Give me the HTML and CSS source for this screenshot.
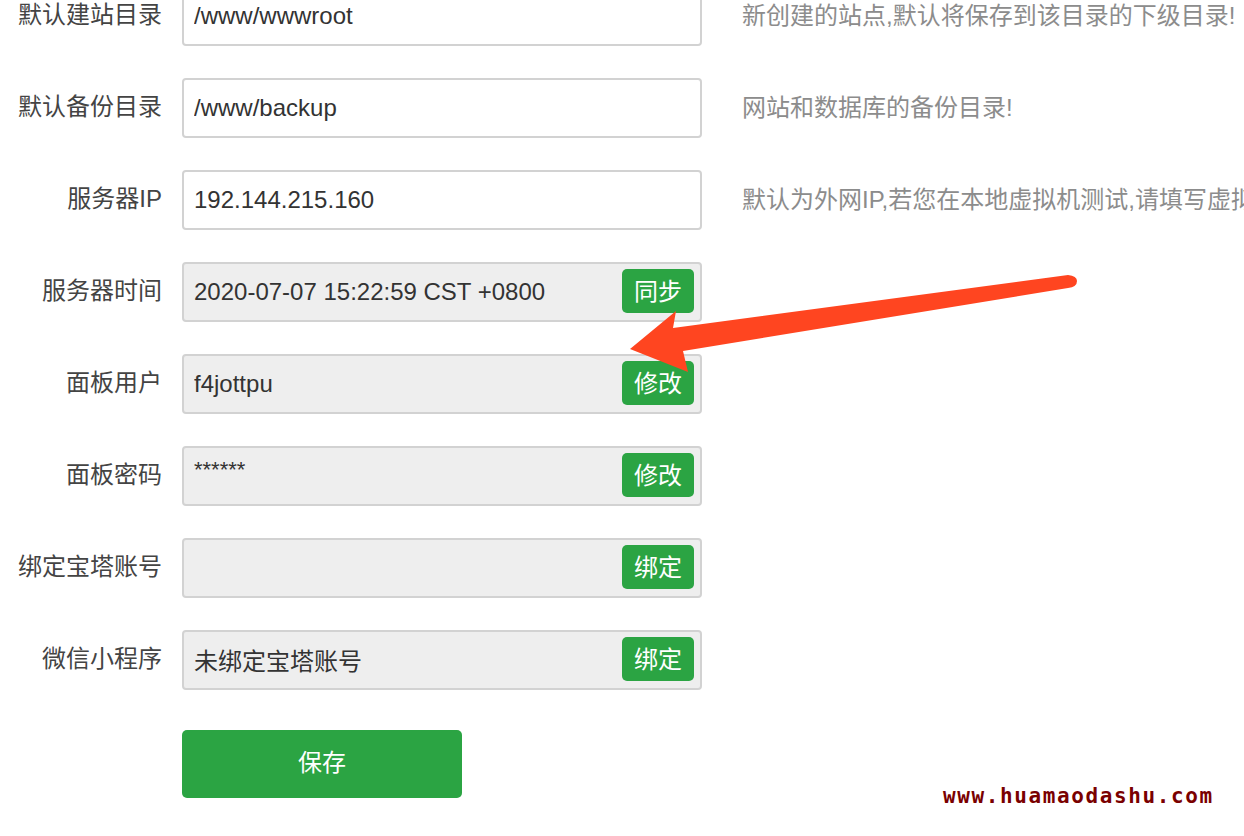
FILE: index.html
```html
<!DOCTYPE html>
<html lang="zh-CN">
<head>
    <meta charset="UTF-8">
    <meta name="viewport" content="width=device-width, initial-scale=1.0">
    <title>面板设置</title>
    <link rel="stylesheet" href="styles.css">
</head>
<body>
    <div class="page">
        <form class="settings-form">
            <div class="form-row">
                <label class="row-label">默认建站目录</label>
                <div class="field">
                    <input class="field-input" type="text" value="/www/wwwroot">
                </div>
                <span class="row-tip">新创建的站点,默认将保存到该目录的下级目录!</span>
            </div>
            <div class="form-row">
                <label class="row-label">默认备份目录</label>
                <div class="field">
                    <input class="field-input" type="text" value="/www/backup">
                </div>
                <span class="row-tip">网站和数据库的备份目录!</span>
            </div>
            <div class="form-row">
                <label class="row-label">服务器IP</label>
                <div class="field">
                    <input class="field-input" type="text" value="192.144.215.160">
                </div>
                <span class="row-tip">默认为外网IP,若您在本地虚拟机测试,请填写虚拟机IP!</span>
            </div>
            <div class="form-row">
                <label class="row-label">服务器时间</label>
                <div class="field is-disabled">
                    <input class="field-input" type="text" value="2020-07-07 15:22:59 CST +0800" disabled>
                    <button type="button" class="field-btn">同步</button>
                </div>
            </div>
            <div class="form-row">
                <label class="row-label">面板用户</label>
                <div class="field is-disabled">
                    <input class="field-input" type="text" value="f4jottpu" disabled>
                    <button type="button" class="field-btn">修改</button>
                </div>
            </div>
            <div class="form-row">
                <label class="row-label">面板密码</label>
                <div class="field is-disabled">
                    <input class="field-input is-mask" type="text" value="******" disabled>
                    <button type="button" class="field-btn">修改</button>
                </div>
            </div>
            <div class="form-row">
                <label class="row-label">绑定宝塔账号</label>
                <div class="field is-disabled">
                    <input class="field-input" type="text" value="" disabled>
                    <button type="button" class="field-btn">绑定</button>
                </div>
            </div>
            <div class="form-row">
                <label class="row-label">微信小程序</label>
                <div class="field is-disabled">
                    <input class="field-input" type="text" value="未绑定宝塔账号" disabled>
                    <button type="button" class="field-btn">绑定</button>
                </div>
            </div>
            <div class="form-actions">
                <button type="button" class="save-btn">保存</button>
            </div>
        </form>

        <!-- annotation arrow drawn over the screenshot -->
        <svg class="annotation" width="1244" height="836" viewBox="0 0 1244 836">
            <path d="M630 349 L676 311 L673 328 L1068 275 Q1077 276 1077 281 Q1077 287 1068 288 L683 351 L688 372 Z" fill="#ff4520"/>
        </svg>

        <div class="watermark">www.huamaodashu.com</div>
    </div>
</body>
</html>
```

FILE: styles.css
```css
:root {
    --text-primary: #333;
    --text-label: #444;
    --text-tip: #8c8c8c;
    --border-color: #d2d2d2;
    --disabled-bg: #eeeeee;
    --green: #2ba443;
}

html, body {
    margin: 0;
    height: 100%;
    overflow: hidden;
    background: #fff;
}

body {
    font-family: "Liberation Sans", "Noto Sans CJK SC", sans-serif;
    color: var(--text-primary);
}

.page {
    position: relative;
    width: 1244px;
    height: 836px;
    overflow: hidden;
}

/* --- Form --- */
.settings-form {
    margin-top: -14px;
    display: flex;
    flex-direction: column;
    gap: 32px;
}

.form-row {
    display: flex;
    align-items: center;
    gap: 20px;
    height: 60px;
}

.row-label {
    width: 162px;
    flex-shrink: 0;
    text-align: right;
    font-size: 24px;
    color: var(--text-label);
    white-space: nowrap;
    margin-top: -7px;
}

.field {
    width: 520px;
    height: 60px;
    flex-shrink: 0;
    box-sizing: border-box;
    border: 2px solid var(--border-color);
    border-radius: 4px;
    background: #fff;
    display: flex;
    align-items: center;
    padding: 0 6px 0 10px;
}
.field.is-disabled { background: var(--disabled-bg); }

.field-input {
    flex: 1;
    min-width: 0;
    border: none;
    outline: none;
    background: transparent;
    padding: 0;
    font-family: inherit;
    font-size: 24px;
    color: var(--text-primary);
    margin-top: -1px;
}
.field-input:disabled { color: var(--text-primary); -webkit-text-fill-color: var(--text-primary); }
.field-input.is-mask { font-size: 22px; margin-top: -12px; }

.field-btn {
    width: 72px;
    height: 44px;
    border: none;
    border-radius: 5px;
    background: var(--green);
    color: #fff;
    font-family: inherit;
    font-size: 24px;
    padding: 0 0 3px;
    margin-top: -2px;
    flex-shrink: 0;
}

.row-tip {
    margin-left: 20px;
    font-size: 24px;
    color: var(--text-tip);
    white-space: nowrap;
    margin-top: -5px;
}

.form-actions {
    padding-left: 182px;
    margin-top: 8px;
}

.save-btn {
    width: 280px;
    height: 68px;
    border: none;
    border-radius: 5px;
    background: var(--green);
    color: #fff;
    font-family: inherit;
    font-size: 24px;
    padding: 0 0 8px;
}

/* --- Overlays --- */
.annotation {
    position: absolute;
    top: 0;
    left: 0;
    pointer-events: none;
}

.watermark {
    position: absolute;
    left: 943px;
    top: 784px;
    font-family: "DejaVu Sans Mono", monospace;
    font-weight: bold;
    font-size: 21px;
    letter-spacing: 1.6px;
    color: #7a0000;
}
```
